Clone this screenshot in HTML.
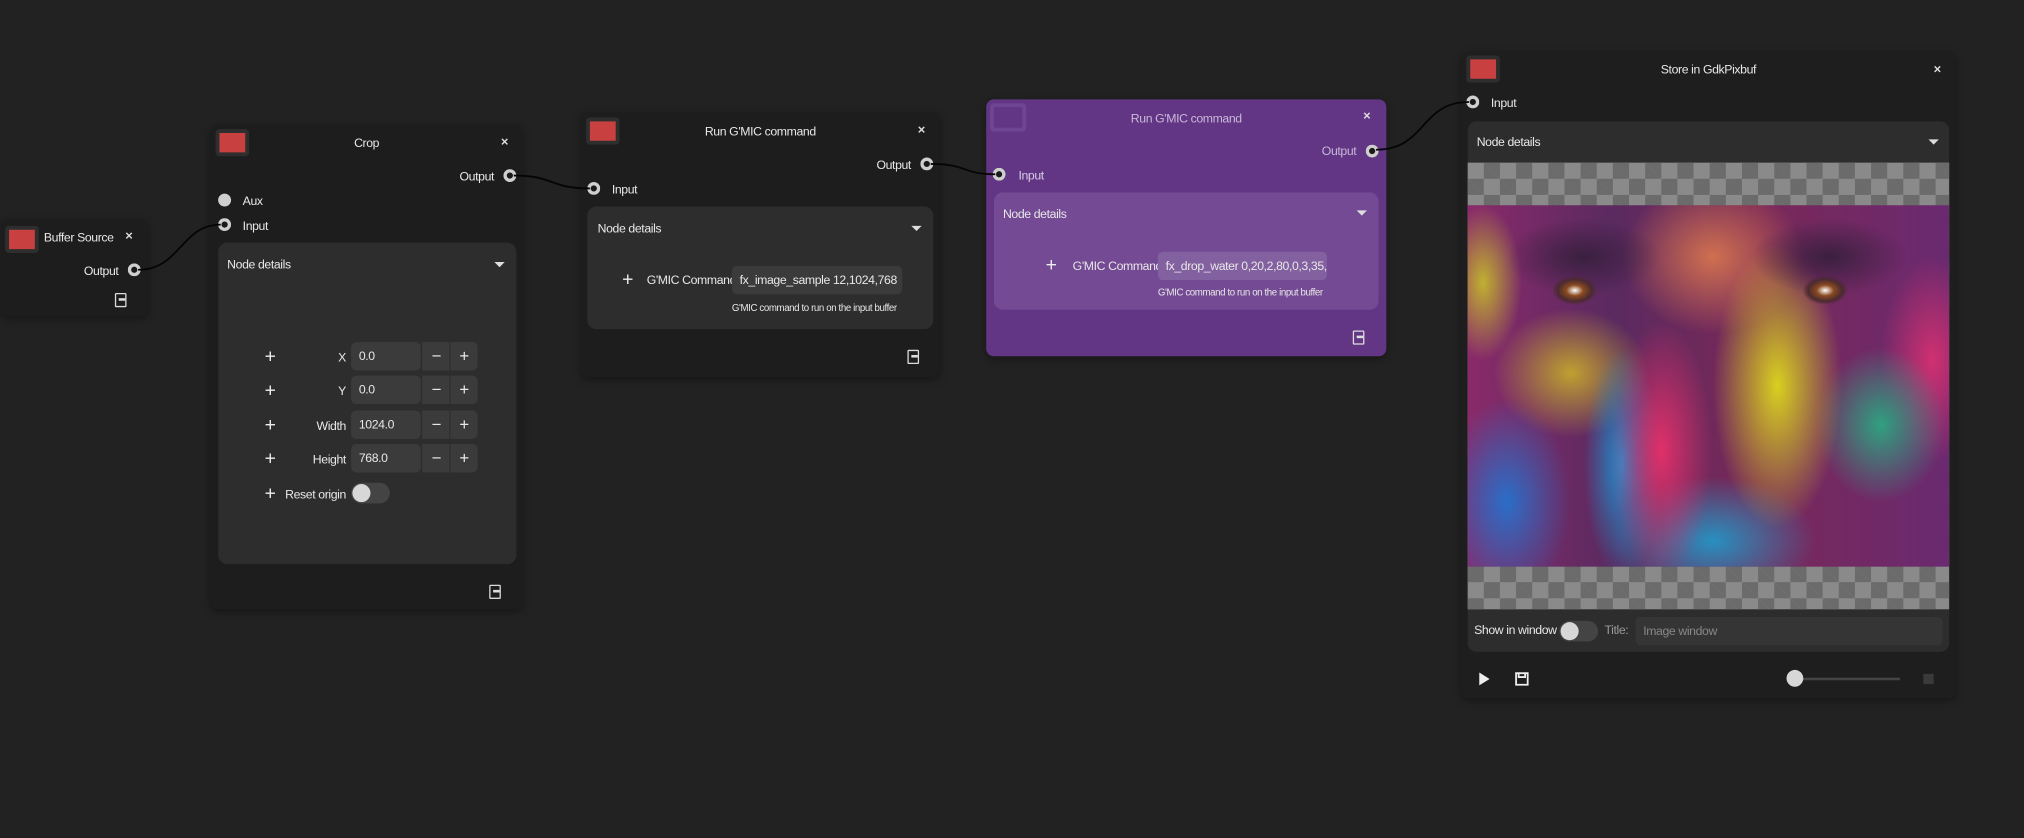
<!DOCTYPE html>
<html><head><meta charset="utf-8"><style>
html,body{margin:0;padding:0;background:#222;width:2024px;height:838px;overflow:hidden}
#s{position:absolute;left:0;top:0;width:1568px;height:649px;transform:scale(1.29082);transform-origin:0 0;font-family:"Liberation Sans",sans-serif;font-size:9.5px;letter-spacing:-0.3px;color:#e8e8e8}
.a{position:absolute;white-space:nowrap}
.node{position:absolute;background:#1d1d1d;border-radius:6px;box-shadow:0 2px 6px rgba(0,0,0,.35)}
.sw{position:absolute;width:20px;height:15px;background:#c84040;border:3px solid #2e2e2e;border-radius:3px}
.x{position:absolute;font-size:10px;font-weight:bold;color:#ddd}
.port{position:absolute;width:10px;height:10px;border-radius:50%;background:#1a1a1a;box-shadow:inset 0 0 0 2.6px #cfcfcf}
.panel{position:absolute;background:#2d2d2d;border-radius:7px}
.tri{position:absolute;width:0;height:0;border-left:4px solid transparent;border-right:4px solid transparent;border-top:4px solid #ddd}
.plus{position:absolute;font-size:15px;line-height:10px;color:#eee}
.lbl{position:absolute;text-align:right;white-space:nowrap}
.ent{position:absolute;background:#3b3b3b;border-radius:4px;height:22px;line-height:23px;padding-left:6px;box-sizing:border-box;overflow:hidden;white-space:nowrap}
.btn{position:absolute;height:22px;line-height:21px;text-align:center;font-size:13px;background:#3b3b3b;border-left:1px solid #2d2d2d}
.tog{position:absolute;width:30px;height:16px;border-radius:8px;background:#444}
.tog:after{content:"";position:absolute;left:1px;top:1px;width:14px;height:14px;border-radius:50%;background:#d7d7d7}
.ic{position:absolute;width:7px;height:9px;border:1.3px solid #ddd;border-radius:1px}
.ic:after{content:"";position:absolute;left:2px;top:3px;width:5px;height:2px;background:#ddd}
</style></head><body><div id="s">

<!-- Buffer Source -->
<div class="node" style="left:0;top:170px;width:115px;height:75px">
<div class="sw" style="left:4px;top:5px"></div>
<div class="a" style="left:34px;top:9px">Buffer Source</div>
<div class="x" style="left:97px;top:8px">×</div>
<div class="a" style="left:65px;top:35px">Output</div>
<div class="port" style="left:99px;top:34px"></div>
<div class="ic" style="left:89px;top:57px"></div>
</div>

<!-- Crop -->
<div class="node" style="left:163px;top:97px;width:242px;height:375px">
<div class="sw" style="left:4px;top:3px"></div>
<div class="a" style="left:0;width:242px;text-align:center;top:9px">Crop</div>
<div class="x" style="left:225px;top:8px">×</div>
<div class="a" style="left:193px;top:35px">Output</div>
<div class="port" style="left:227px;top:34px"></div>
<div class="a" style="left:6px;top:53px;width:10px;height:10px;border-radius:50%;background:#cfcfcf"></div>
<div class="a" style="left:25px;top:54px">Aux</div>
<div class="port" style="left:6px;top:72px"></div>
<div class="a" style="left:25px;top:73px">Input</div>
<div class="panel" style="left:6px;top:91px;width:231px;height:249px">
<div class="a" style="left:7px;top:12px">Node details</div>
<div class="tri" style="left:214px;top:15px"></div>
</div>
</div>

<!-- GMIC 1 -->
<div class="node" style="left:450px;top:87px;width:278px;height:205px">
<div class="sw" style="left:4px;top:4px"></div>
<div class="a" style="left:0;width:278px;text-align:center;top:10px">Run G'MIC command</div>
<div class="x" style="left:261px;top:9px">×</div>
<div class="a" style="left:229px;top:36px">Output</div>
<div class="port" style="left:263px;top:35px"></div>
<div class="port" style="left:5px;top:54px"></div>
<div class="a" style="left:24px;top:55px">Input</div>
<div class="panel" style="left:5px;top:73px;width:268px;height:95px">
<div class="a" style="left:8px;top:12px">Node details</div>
<div class="tri" style="left:251px;top:15px"></div>
<div class="plus" style="left:27px;top:52px">+</div>
<div class="a" style="left:46px;top:52px">G'MIC Command</div>
<div class="ent" style="left:112px;top:46px;width:132px">fx_image_sample 12,1024,768</div>
<div class="a" style="left:112px;top:74px;font-size:7.5px">G'MIC command to run on the input buffer</div>
</div>
<div class="ic" style="left:253px;top:184px"></div>
</div>

<!-- GMIC 2 -->
<div class="node" style="left:764px;top:77px;width:310px;height:199px;background:#623685">
<div class="a" style="left:3px;top:3px;width:22px;height:16px;border:3px solid #6e4590;border-radius:3px"></div>
<div class="a" style="left:0;width:310px;text-align:center;top:10px;color:#c8b8d8">Run G'MIC command</div>
<div class="x" style="left:292px;top:8px">×</div>
<div class="a" style="left:260px;top:35px;color:#c8b8d8">Output</div>
<div class="port" style="left:294px;top:35px"></div>
<div class="port" style="left:5px;top:53px"></div>
<div class="a" style="left:25px;top:54px;color:#d8cce4">Input</div>
<div class="panel" style="left:6px;top:72px;width:298px;height:91px;background:#734a93">
<div class="a" style="left:7px;top:12px">Node details</div>
<div class="tri" style="left:281px;top:14px"></div>
<div class="plus" style="left:40px;top:52px">+</div>
<div class="a" style="left:61px;top:52px">G'MIC Command</div>
<div class="ent" style="left:127px;top:46px;width:131px;background:#83609f">fx_drop_water 0,20,2,80,0,3,35,1(</div>
<div class="a" style="left:127px;top:73px;font-size:7.5px">G'MIC command to run on the input buffer</div>
</div>
<div class="ic" style="left:284px;top:179px"></div>
</div>

<!-- Store -->
<div class="node" style="left:1132px;top:40px;width:383px;height:501px;background:#1e1e1e">
<div class="sw" style="left:4px;top:3px"></div>
<div class="a" style="left:0;width:383px;text-align:center;top:9px">Store in GdkPixbuf</div>
<div class="x" style="left:366px;top:9px">×</div>
<div class="port" style="left:4px;top:34px"></div>
<div class="a" style="left:23px;top:35px">Input</div>
<div class="panel" style="left:5px;top:54px;width:373px;height:411px">
<div class="a" style="left:7px;top:11px">Node details</div>
<div class="tri" style="left:357px;top:14px"></div>
<div class="a" style="left:0;top:32px;width:373px;height:346px;background-color:#8a8a8a;background-image:linear-gradient(45deg,#6b6b6b 25%,transparent 25%,transparent 75%,#6b6b6b 75%),linear-gradient(45deg,#6b6b6b 25%,transparent 25%,transparent 75%,#6b6b6b 75%);background-size:25px 25px;background-position:0 0,12.5px 12.5px"></div>
<div class="a" style="left:0;top:65px;width:373px;height:280px;background:
radial-gradient(ellipse 22px 14px at 83px 66px,#fff 0,#8a4a20 30%,#4a2a30 60%,transparent 80%),
radial-gradient(ellipse 22px 14px at 277px 66px,#fff 0,#8a4a20 30%,#4a2a30 60%,transparent 80%),
radial-gradient(ellipse 60px 30px at 90px 40px,#3a2040 0,transparent 100%),
radial-gradient(ellipse 60px 30px at 280px 40px,#3a2040 0,transparent 100%),
radial-gradient(ellipse 50px 80px at 30px 230px,#2a6ec8 0,transparent 100%),
radial-gradient(ellipse 40px 100px at 150px 190px,#e0306a 0,transparent 100%),
radial-gradient(ellipse 30px 90px at 120px 200px,#2090d0 0,transparent 100%),
radial-gradient(ellipse 50px 110px at 240px 140px,#d8d020 0,transparent 100%),
radial-gradient(ellipse 80px 50px at 190px 260px,#2890c0 0,transparent 100%),
radial-gradient(ellipse 50px 60px at 320px 170px,#30a080 0,transparent 100%),
radial-gradient(ellipse 60px 50px at 80px 130px,#c0a030 0,transparent 100%),
radial-gradient(ellipse 70px 60px at 190px 40px,#d07050 0,transparent 100%),
radial-gradient(ellipse 40px 80px at 360px 120px,#d03070 0,transparent 100%),
radial-gradient(ellipse 30px 60px at 12px 60px,#c0b030 0,transparent 100%),
linear-gradient(90deg,#8a2a6a,#5a2a60 30%,#7a2858 60%,#6a2a70)"></div>
<div class="a" style="left:5px;top:389px">Show in window</div>
<div class="tog" style="left:71px;top:387px"></div>
<div class="a" style="left:106px;top:389px;color:#999">Title:</div>
<div class="ent" style="left:130px;top:384px;width:238px;color:#888;background:#353535">Image window</div>
</div>
<svg class="a" style="left:12px;top:480px" width="12" height="12"><path d="M2 1 L10 6 L2 11Z" fill="#eee"/></svg>
<svg class="a" style="left:41px;top:480px" width="12" height="12"><path d="M1.5 1.5h9v9h-9z M3.5 1.5v3h5v-3" fill="none" stroke="#eee" stroke-width="1.4"/></svg>
<div class="a" style="left:258px;top:485px;width:82px;height:2px;background:#444"></div>
<div class="a" style="left:252px;top:479px;width:13px;height:13px;border-radius:50%;background:#d7d7d7"></div>
<div class="a" style="left:358px;top:482px;width:8px;height:8px;background:#3a3a3a"></div>
</div>
<div class="ic" style="left:379px;top:453px"></div>

<svg class="a" style="left:0;top:0;pointer-events:none" width="1568" height="649">
<g fill="none" stroke="#050505" stroke-width="1.4">
<path d="M107 209 C140 209 140 174 171 174"/>
<path d="M398 136 C430 136 425 146 457 146"/>
<path d="M721 127 C750 127 745 135 771 135"/>
<path d="M1066 116 C1105 116 1100 79 1138 79"/>
</g></svg>

<!-- Crop rows -->
<div class="plus" style="left:205px;top:272px">+</div>
<div class="lbl" style="left:220px;width:48px;top:272px">X</div>
<div class="ent" style="left:272px;top:265px;width:54px">0.0</div>
<div class="btn" style="left:326px;top:265px;width:22px">−</div>
<div class="btn" style="left:348px;top:265px;width:21px;border-radius:0 4px 4px 0">+</div>
<div class="plus" style="left:205px;top:298px">+</div>
<div class="lbl" style="left:220px;width:48px;top:298px">Y</div>
<div class="ent" style="left:272px;top:291px;width:54px">0.0</div>
<div class="btn" style="left:326px;top:291px;width:22px">−</div>
<div class="btn" style="left:348px;top:291px;width:21px;border-radius:0 4px 4px 0">+</div>
<div class="plus" style="left:205px;top:325px">+</div>
<div class="lbl" style="left:220px;width:48px;top:325px">Width</div>
<div class="ent" style="left:272px;top:318px;width:54px">1024.0</div>
<div class="btn" style="left:326px;top:318px;width:22px">−</div>
<div class="btn" style="left:348px;top:318px;width:21px;border-radius:0 4px 4px 0">+</div>
<div class="plus" style="left:205px;top:351px">+</div>
<div class="lbl" style="left:210px;width:58px;top:351px">Height</div>
<div class="ent" style="left:272px;top:344px;width:54px">768.0</div>
<div class="btn" style="left:326px;top:344px;width:22px">−</div>
<div class="btn" style="left:348px;top:344px;width:21px;border-radius:0 4px 4px 0">+</div>
<div class="plus" style="left:205px;top:378px">+</div>
<div class="lbl" style="left:210px;width:58px;top:378px">Reset origin</div>
<div class="tog" style="left:272px;top:374px"></div>
</div></body></html>
